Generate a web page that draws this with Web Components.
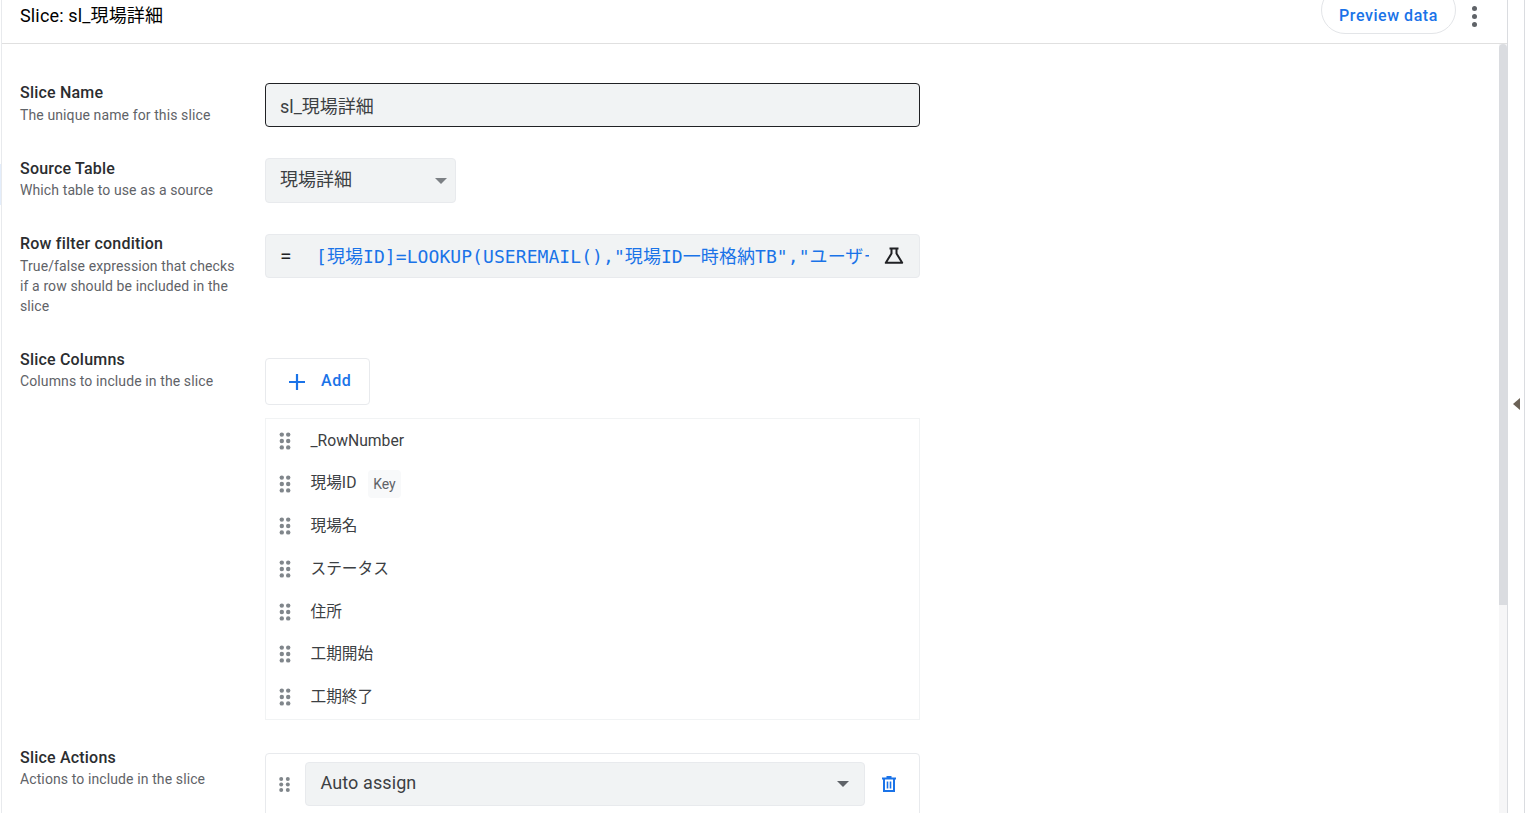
<!DOCTYPE html>
<html lang="ja"><head><meta charset="utf-8"><title>Slice</title>
<style>
html,body{margin:0;height:813px;overflow:hidden;background:#fff;font-family:Roboto,"Noto Sans CJK JP",sans-serif;color:#202124}
</style></head><body>
<app-shell>
  <pane-header slot="header" title-text="Slice: sl_現場詳細"></pane-header>
  <form-row label="Slice Name" desc="The unique name for this slice" gap="31"><text-field value="sl_現場詳細"></text-field></form-row>
  <form-row tight label="Source Table" desc="Which table to use as a source" gap="31" lift="1"><select-field value="現場詳細" width="191" height="45"></select-field></form-row>
  <form-row label="Row filter condition" desc="True/false expression that checks if a row should be included in the slice" gap="71"><expr-field value='[現場ID]=LOOKUP(USEREMAIL(),"現場ID一時格納TB","ユーザーメール","現場ID")'></expr-field></form-row>
  <form-row tight label="Slice Columns" desc="Columns to include in the slice" gap="27" top="9">
    <add-button></add-button>
    <col-list>
      <col-item latin>_RowNumber</col-item>
      <col-item key-badge>現場ID</col-item>
      <col-item>現場名</col-item>
      <col-item>ステータス</col-item>
      <col-item>住所</col-item>
      <col-item>工期開始</col-item>
      <col-item>工期終了</col-item>
    </col-list>
  </form-row>
  <form-row tight label="Slice Actions" desc="Actions to include in the slice" gap="0" top="6"><action-item value="Auto assign"></action-item></form-row>
</app-shell>
<script>
const DOTS=`<svg width="12" height="18" viewBox="0 0 12 18" fill="#80868b"><circle cx="2.800" cy="2.600" r="2.200"/><circle cx="9.200" cy="2.600" r="2.200"/><circle cx="2.800" cy="9" r="2.200"/><circle cx="9.200" cy="9" r="2.200"/><circle cx="2.800" cy="15.400" r="2.200"/><circle cx="9.200" cy="15.400" r="2.200"/></svg>`;
function def(name,css,html){
  customElements.define(name,class extends HTMLElement{
    constructor(){super();this.attachShadow({mode:'open'})}
    connectedCallback(){
      const a=n=>(this.getAttribute(n)??'').replace(/&/g,'&amp;').replace(/</g,'&lt;').replace(/"/g,'&quot;');
      this.shadowRoot.innerHTML=`<style>${css}</style>`+html(a,this);
    }
  });
}
def('app-shell',`
:host{display:flex;height:813px;overflow:hidden}
.edge{width:2px;flex:none;box-sizing:border-box;border-right:1px solid #e8eaed;padding-top:164px}
.edge i{display:block;width:1px;height:41px;background:#e3edfb}
.pane{width:1505px;flex:none;display:flex;flex-direction:column;border-right:1px solid #dadce0}
.body{flex:1;min-height:0;display:flex}
.content{flex:1;min-width:0;padding:39px 0 0 18px;overflow:hidden;box-sizing:border-box}
.track{width:8px;flex:none;background:#f6f6f7}
.thumb{height:561px;background:#dadce0;border-radius:4px 4px 0 0}
.side{flex:1;display:flex;align-items:center;border-right:1px solid #dadce0;margin-right:1px}
.caret{margin:-5px 0 0 5px;width:0;height:0;border-style:solid;border-width:6px 7px 6px 0;border-color:transparent #6b6256 transparent transparent}
`,()=>`<div class="edge"><i></i></div><div class="pane"><slot name="header"></slot><div class="body"><div class="content"><slot></slot></div><div class="track"><div class="thumb"></div></div></div></div><div class="side"><div class="caret"></div></div>`);
def('pane-header',`
:host{display:flex;height:43px;flex:none;border-bottom:1px solid #e0e0e0;padding:0 18px;overflow:hidden}
.t{font-size:18px;line-height:22px;color:#000;flex:1;margin-top:5px;white-space:nowrap;letter-spacing:.15px}
.btn{box-sizing:border-box;width:135px;height:48px;margin-top:-14px;margin-right:9px;border:1px solid #e3e5e8;border-radius:24px;color:#1a73e8;font-size:16px;font-weight:500;letter-spacing:.55px;display:flex;align-items:flex-end;justify-content:center;padding-bottom:8px}
.more{width:18px;display:flex;flex-direction:column;gap:3px;align-items:center;margin-top:6px;margin-right:6px}
.more i{width:5px;height:5px;border-radius:50%;background:#5f6368}
`,a=>`<div class="t">${a('title-text')}</div><div class="btn">Preview data</div><div class="more"><i></i><i></i><i></i></div>`);
def('form-row',`
:host{display:flex;width:900px}
.l{width:245px;flex:none;box-sizing:border-box}
.n{font-size:16px;font-weight:500;line-height:20px;color:#2b2d30;letter-spacing:.2px}
.d{font-size:14px;line-height:20px;color:#5f6368;margin-top:2px;width:220px;letter-spacing:.11px}
:host([tight]) .l{padding-top:1px}
:host([tight]) .d{margin-top:1px}
.c{width:655px;flex:none;display:flex;flex-direction:column}
`,a=>`<div class="l"><div class="n">${a('label')}</div><div class="d">${a('desc')}</div></div><div class="c" style="padding-top:${a('top')||0}px;padding-bottom:${a('gap')}px"><slot></slot></div>`);
const fieldBase=`:host{display:flex;box-sizing:border-box;background:#f1f3f4;border:1px solid #e8eaed;border-radius:4px;align-items:center;color:#3c4043}`;
def('text-field',fieldBase+`:host{height:44px;border:1px solid #202124;padding:0 14px;font-size:18px}`,a=>`<span>${a('value')}</span>`);
def('select-field',fieldBase+`:host{padding:0 8px 0 14px;font-size:18px;justify-content:space-between}
span{margin-top:-5px}
.a{width:0;height:0;border-style:solid;border-width:6px 6px 0;border-color:#7c8084 transparent transparent}`,(a,el)=>{el.style.width=a('width')+'px';el.style.height=a('height')+'px';return `<span>${a('value')}</span><i class="a"></i>`});
def('expr-field',fieldBase+`:host{height:44px;padding:0 15px;font-size:18px}
.eq{width:36px;flex:none;color:#202124;font-size:21px;line-height:24px;margin-top:-1px;margin-left:-1px}
.x{flex:1;min-width:0;overflow:hidden;white-space:nowrap;color:#1a73e8;font-family:"DejaVu Sans Mono","Noto Sans CJK JP",monospace;font-size:18px;letter-spacing:.07px;margin-top:-2px}
svg{flex:none;margin-left:15px}`,a=>`<span class="eq">=</span><span class="x">${a('value')}</span><svg width="20" height="20" viewBox="0 0 20 20" fill="none" stroke="#202124" stroke-width="2" stroke-linejoin="round"><path d="M5.500 2.500h9M7.500 2.500v5L1.800 16.800h16.400L12.500 7.500v-5"/></svg>`);
def('add-button',`:host{display:flex;box-sizing:border-box;width:105px;height:47px;border:1px solid #e8eaed;border-radius:4px;align-items:center;color:#1a73e8;font-size:16px;font-weight:500;padding-left:22px;gap:15px;margin-bottom:13px;letter-spacing:.6px}
span{margin-top:-2px}`,()=>`<svg width="18" height="18" viewBox="0 0 18 18" stroke="#1a73e8" stroke-width="2.200" fill="none"><path d="M9 1v16M1 9h16"/></svg><span>Add</span>`);
def('col-list',`:host{display:block;box-sizing:border-box;height:302px;border:1px solid #f1f3f4;overflow:hidden}`,()=>`<slot></slot>`);
def('col-item',`:host{display:flex;height:42.7px;align-items:center;padding-left:12.500px;font-size:15.700px;color:#3c4043}
.h{width:32px;flex:none;display:flex;align-items:center;margin-top:1px}
.k{margin-left:11.500px;margin-top:1px;height:28px;width:33px;display:flex;align-items:center;justify-content:center;background:#f8f9fa;border-radius:4px;font-size:14px;color:#5f6368}
.r{display:flex;align-items:center}
.x{margin-top:-2px}
:host([latin]) .x{margin-top:1px}
:host([key-badge]) .x{margin-top:-3px}`,(a,el)=>`<span class="h">${DOTS}</span><span class="r"><span class="x"><slot></slot></span>${el.hasAttribute('key-badge')?'<span class="k">Key</span>':''}</span>`);
def('action-item',`:host{display:flex;box-sizing:border-box;height:70px;margin-bottom:-10px;border:1px solid #e8eaed;border-radius:4px;padding:8px 0 0 13px;align-items:flex-start}
.h{width:26px;flex:none;height:44px;display:flex;align-items:center}
.s{box-sizing:border-box;width:560px;height:44px;background:#f1f3f4;border:1px solid #e8eaed;border-radius:4px;display:flex;align-items:center;justify-content:space-between;padding:0 15px 0 14.500px;font-size:18px;color:#3c4043;letter-spacing:.1px}
.s span{margin-top:-3px}
.a{width:0;height:0;border-style:solid;border-width:6px 6px 0;border-color:#5f6368 transparent transparent}
.t{height:44px;display:flex;align-items:center;margin-left:17px}`,a=>`<span class="h"><svg width="11" height="15" viewBox="0 0 11 15" fill="#80868b"><circle cx="2.200" cy="2" r="2"/><circle cx="8.800" cy="2" r="2"/><circle cx="2.200" cy="7.500" r="2"/><circle cx="8.800" cy="7.500" r="2"/><circle cx="2.200" cy="13" r="2"/><circle cx="8.800" cy="13" r="2"/></svg></span><div class="s"><span>${a('value')}</span><i class="a"></i></div><div class="t"><svg width="14" height="16" viewBox="0 0 14 16" fill="none" stroke="#1a73e8"><path stroke-width="2" d="M0 2.500h14M4.500 1h5"/><path stroke-width="2" d="M2 3v12h10V3"/><path stroke-width="1.600" d="M5.500 5.500v7M8.500 5.500v7"/></svg></div>`);
</script>
</body></html>
